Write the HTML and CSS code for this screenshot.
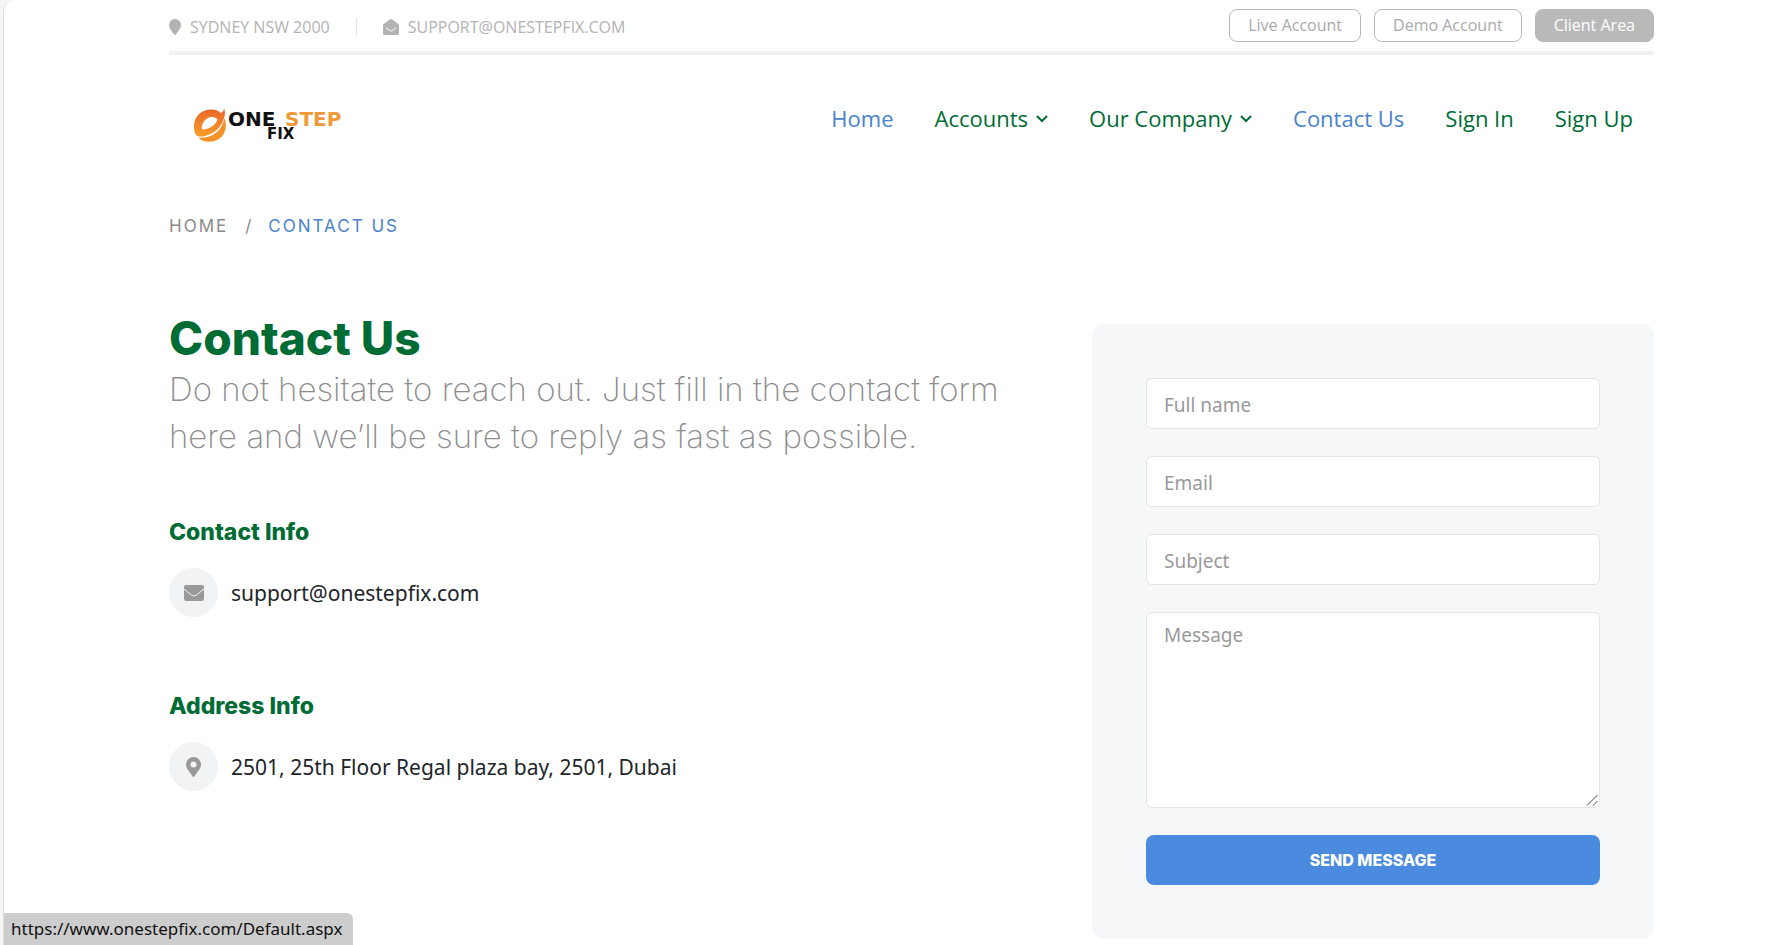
FILE: index.html
```html
<!DOCTYPE html>
<html lang="en">
<head>
<meta charset="utf-8">
<title>Contact Us - One Step Fix</title>
<link rel="stylesheet" href="styles.css">
</head>
<body>
<div class="page">
  <div class="topbar">
    <ul class="topbar-info">
      <li>
        <svg class="icon-pin" viewBox="0 0 12 16" aria-hidden="true"><path d="M6 0a6 6 0 0 0-6 6c0 2.600 2.200 5.400 3.600 7.500L5.400 15.700q.6.600 1.200 0L8.400 13.500C9.800 11.400 12 8.600 12 6a6 6 0 0 0-6-6z"/></svg>
        <span>SYDNEY NSW 2000</span>
      </li>
      <li>
        <svg class="icon-open" viewBox="0 0 16 16" aria-hidden="true"><path d="M6.300.700Q8-.6 9.700.700L15.300 5q.7.600.7 1.400V14.500q0 1.500-1.500 1.500h-13Q0 16 0 14.500V6.400Q0 5.600.7 5z"/><path class="fold" d="M3 8.600l3.800 3q1.200.900 2.400 0l3.800-3"/></svg>
        <a href="mailto:support@onestepfix.com">SUPPORT@ONESTEPFIX.COM</a>
      </li>
    </ul>
    <div class="topbar-actions">
      <a class="pill" href="#">Live Account</a>
      <a class="pill" href="#">Demo Account</a>
      <a class="pill pill-solid" href="#">Client Area</a>
    </div>
  </div>

  <header class="header">
    <a class="logo" href="#" aria-label="One Step Fix">
      <svg viewBox="0 0 160 54">
        <defs>
          <linearGradient id="flame" x1="0" y1="0" x2="0" y2="1"><stop offset="0" stop-color="#e9632a"/><stop offset="1" stop-color="#f8a02a"/></linearGradient>
        </defs>
        <g transform="translate(0 15)">
          <path fill="url(#flame)" fill-rule="evenodd" d="M16 3.500C21 3 25 5 27 7C29 6 30 4 30 2C31.500 6 31 9 30 12C28 21 20 28 11 30C7 31 3 31 1.500 28C0 25 0 23 0 20C0 11 7 4 16 3.500zM17 11C11 12 7 18 8 23.500C14 24 22 19 23.500 13.500C22 11.500 19 11 17 11z"/>
          <path fill="#f5922a" d="M30.500 12C34 21 31 31 22 34.500C15 37 8 36 4.500 31.500C18 33 28 25 30.500 12z"/>
        </g>
        <text class="mark mark-one" x="34" y="35">ONE</text>
        <text class="mark mark-step" x="91" y="35">STEP</text>
        <text class="mark mark-fix" x="73" y="48">FIX</text>
      </svg>
    </a>
    <nav class="nav">
      <a class="active" href="#">Home</a>
      <a href="#">Accounts <svg class="caret" viewBox="0 0 12 8" aria-hidden="true"><path d="M1 1l5 5 5-5"/></svg></a>
      <a href="#">Our Company <svg class="caret" viewBox="0 0 12 8" aria-hidden="true"><path d="M1 1l5 5 5-5"/></svg></a>
      <a class="active" href="#">Contact Us</a>
      <a href="#">Sign In</a>
      <a href="#">Sign Up</a>
    </nav>
  </header>

  <nav class="breadcrumb" aria-label="Breadcrumb">
    <a href="#">HOME</a><span class="slash">/</span><span class="current">CONTACT US</span>
  </nav>

  <main class="content">
    <section class="intro">
      <h1>Contact Us</h1>
      <p class="lead">Do not hesitate to reach out. Just fill in the contact form<br>here and we’ll be sure to reply as fast as possible.</p>
      <div class="info">
        <h2>Contact Info</h2>
        <div class="info-row">
          <span class="badge"><svg class="icon-mail" viewBox="0 0 20 16" aria-hidden="true"><rect width="20" height="16" rx="2"/><path class="fold" d="M0 4l7.500 6q2.500 2 5 0L20 4"/></svg></span>
          <span>support@onestepfix.com</span>
        </div>
      </div>
      <div class="info">
        <h2>Address Info</h2>
        <div class="info-row">
          <span class="badge"><svg class="icon-marker" viewBox="0 0 15 20" aria-hidden="true"><path fill-rule="evenodd" d="M7.500 0A7.500 7.500 0 0 0 0 7.500C0 10.500 1 11.500 6.700 19.500q.8 1 1.600 0C14 11.500 15 10.500 15 7.500A7.500 7.500 0 0 0 7.500 0zm0 4.500a3 3 0 1 1 0 6 3 3 0 0 1 0-6z"/></svg></span>
          <span>2501, 25th Floor Regal plaza bay, 2501, Dubai</span>
        </div>
      </div>
    </section>

    <form class="card">
      <input type="text" aria-label="Full name" placeholder="Full name">
      <input type="email" aria-label="Email" placeholder="Email">
      <input type="text" aria-label="Subject" placeholder="Subject">
      <div class="message">
        <textarea aria-label="Message" placeholder="Message"></textarea>
        <svg class="grip" viewBox="0 0 12 12" aria-hidden="true"><path d="M1 11.500L11.500 1M7 11.500L11.500 7"/></svg>
      </div>
      <button type="button">SEND MESSAGE</button>
    </form>
  </main>
</div>
<div class="status">https://www.onestepfix.com/Default.aspx</div>
</body>
</html>
```

FILE: styles.css
```css
* { box-sizing: border-box; }

body {
  margin: 0;
  padding-left: 3px;
  background: #f5f5f5;
  font-family: "Open Sans", sans-serif;
  overflow: hidden;
}

a { color: inherit; text-decoration: none; }

.page {
  min-height: 100vh;
  padding: 9px 126px 6px 165px;
  border-left: 1px solid #dedede;
  border-top-left-radius: 12px;
  background: #fff;
}

.topbar {
  display: flex;
  justify-content: space-between;
  align-items: flex-start;
  height: 46px;
  border-bottom: 4px solid #f1f1f1;
}

.topbar-info {
  display: flex;
  margin: 0;
  padding: 9px 0 0;
  list-style: none;
  color: #b3b3b3;
  font-size: 16px;
  line-height: 18px;
}

.topbar-info li { display: flex; align-items: center; gap: 9px; }
.topbar-info li + li { margin-left: 26px; padding-left: 26px; border-left: 1px solid #e4e4e4; }

svg { display: block; fill: currentColor; }
.fold { fill: none; stroke: #fff; stroke-width: 1; }
.icon-pin { width: 12px; height: 16px; }
.icon-open { width: 16px; height: 16px; }

.topbar-actions { display: flex; gap: 13px; }

.pill {
  padding: 0 18px;
  border: 1px solid #b9b9b9;
  border-radius: 8px;
  color: #aaa;
  font-size: 16px;
  line-height: 31px;
}

.pill-solid { background: #b9b9b9; color: #fff; }

.header {
  display: flex;
  justify-content: space-between;
  align-items: center;
  height: 126px;
  padding: 0 21px 0 25px;
}

.logo svg { width: 160px; height: 54px; }
.mark { font-family: "DejaVu Sans", sans-serif; font-weight: 700; }
.mark-one { font-size: 20px; fill: #111; }
.mark-step { font-size: 20px; fill: #f0993a; }
.mark-fix { font-size: 15px; fill: #111; }

.nav { display: flex; gap: 41px; color: #006c35; font-size: 22px; line-height: 30px; }
.nav a { display: flex; align-items: center; gap: 8px; }
.nav .active { color: #4a82cb; }
.caret { width: 12px; height: 8px; margin-top: 2px; fill: none; stroke: currentColor; stroke-width: 2; }

.breadcrumb {
  display: flex;
  gap: 17px;
  padding-top: 33px;
  color: #8a8a8a;
  font: 17px/24px Inter, sans-serif;
  letter-spacing: 2px;
}

.breadcrumb .current { color: #4a82cb; }
.slash { letter-spacing: 0; }

.content { display: flex; justify-content: space-between; align-items: flex-start; padding-top: 86px; }

.intro { font-family: Inter, sans-serif; }
h1, h2 { margin: 0; color: #006c35; font-weight: 800; }
h1 { margin-bottom: 14px; font-size: 46px; line-height: 28px; }
.lead { margin: 0; color: #8d8d8d; font-size: 33px; font-weight: 200; line-height: 47px; }
.info { padding-top: 57px; }
.info h2 { font-size: 23px; line-height: 30px; }
.info-row { display: flex; align-items: center; gap: 13px; padding-top: 21px; color: #212529; font: 21px/30px "Noto Sans", sans-serif; }
.info + .info { padding-top: 74px; }

.badge { display: flex; justify-content: center; align-items: center; width: 49px; height: 49px; border-radius: 50%; background: #f2f3f4; color: #999; }
.badge .fold { stroke: #f2f3f4; }
.icon-mail { width: 20px; height: 16px; }
.icon-marker { width: 15px; height: 20px; }

.card {
  display: flex;
  flex-direction: column;
  gap: 27px;
  flex: 0 0 562px;
  padding: 54px;
  border-radius: 12px;
  background: #f5f7f8;
}

.card input, .card textarea {
  display: block;
  width: 100%;
  padding: 0 17px;
  border: 1px solid #e2e4e5;
  border-radius: 6px;
  background: #fff;
  font: 19px/28px "Noto Sans", sans-serif;
}

.card input { height: 51px; padding-top: 2px; }
.card textarea { height: 196px; padding-top: 8px; resize: none; }
.card ::placeholder { color: #999; opacity: 1; }

.message { position: relative; }
.grip { position: absolute; right: 2px; bottom: 2px; width: 12px; height: 12px; fill: none; stroke: #444; }

.card button {
  height: 50px;
  border: 0;
  border-radius: 8px;
  background: #4a8adf;
  color: #fff;
  font: 800 16px/24px Inter, sans-serif;
}

.status {
  position: fixed;
  left: 4px;
  bottom: 0;
  padding: 0 11px 0 7px;
  border-radius: 0 6px 0 0;
  background: #cdcdcd;
  color: #111;
  font: 17px/32px "Noto Sans", sans-serif;
}
```
